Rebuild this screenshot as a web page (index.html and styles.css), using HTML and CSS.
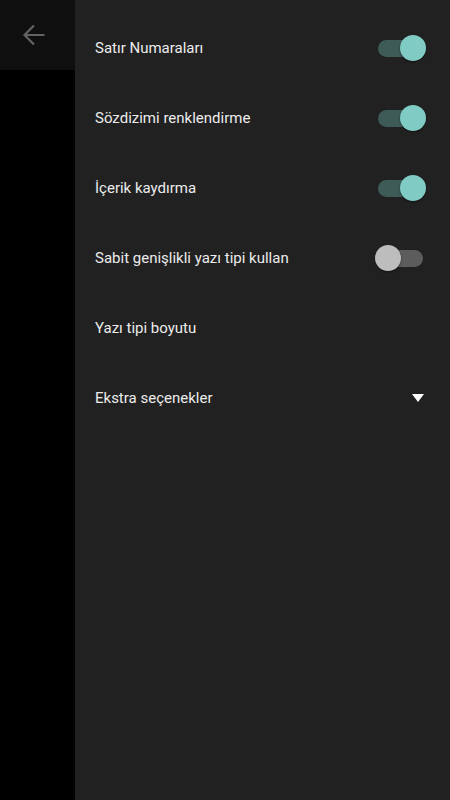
FILE: index.html
```html
<!DOCTYPE html>
<html lang="tr">
<head>
<meta charset="utf-8">
<link rel="stylesheet" href="styles.css">
</head>
<body>
<div class="app">
  <aside class="side">
    <div class="toolbar">
      <svg class="back" width="26" height="26" viewBox="0 0 26 26"><path d="M23.5 13H3.5M13 3.5L3.5 13L13 22.5" fill="none" stroke="#626262" stroke-width="2.2"/></svg>
    </div>
  </aside>
  <main class="panel">
    <div class="row"><span class="label">Satır Numaraları</span><span class="switch on"><span class="track"></span><span class="thumb"></span></span></div>
    <div class="row"><span class="label">Sözdizimi renklendirme</span><span class="switch on"><span class="track"></span><span class="thumb"></span></span></div>
    <div class="row"><span class="label">İçerik kaydırma</span><span class="switch on"><span class="track"></span><span class="thumb"></span></span></div>
    <div class="row"><span class="label">Sabit genişlikli yazı tipi kullan</span><span class="switch off"><span class="track"></span><span class="thumb"></span></span></div>
    <div class="row"><span class="label">Yazı tipi boyutu</span></div>
    <div class="row"><span class="label">Ekstra seçenekler</span><span class="caret"></span></div>
  </main>
</div>
</body>
</html>
```
FILE: styles.css
```css
html, body {
  margin: 0;
  padding: 0;
  background: #000;
}
.app {
  display: flex;
  width: 450px;
  height: 800px;
  font-family: Roboto, "Noto Sans", sans-serif;
}
.side {
  width: 75px;
  flex: none;
  background: #000;
}
.toolbar {
  height: 70px;
  background: #0f0f0f;
  display: flex;
  align-items: center;
  padding-left: 21px;
}
.back { display: block; }
.panel {
  flex: 1;
  background: #212121;
  padding-top: 13px;
}
.row {
  height: 70px;
  display: flex;
  align-items: center;
  justify-content: space-between;
  padding-left: 20px;
  padding-right: 24px;
}
.label {
  color: #ececec;
  font-size: 15px;
}
.switch {
  position: relative;
  width: 51px;
  height: 26px;
}
.switch .track {
  position: absolute;
  left: 3px;
  right: 3px;
  top: 4.5px;
  height: 17px;
  border-radius: 9px;
}
.switch .thumb {
  position: absolute;
  top: 0;
  width: 26px;
  height: 26px;
  border-radius: 50%;
  box-shadow: 0 1px 2px rgba(0,0,0,0.5);
}
.switch.on .track { background: #3e5b57; }
.switch.on .thumb { right: 0; background: #80cbc4; }
.switch.off .track { background: #5c5c5c; }
.switch.off .thumb { left: 0; background: #bdbdbd; }
.caret {
  width: 0;
  height: 0;
  border-left: 6.5px solid transparent;
  border-right: 6.5px solid transparent;
  border-top: 8px solid #fff;
  margin-right: 2px;
}
```
